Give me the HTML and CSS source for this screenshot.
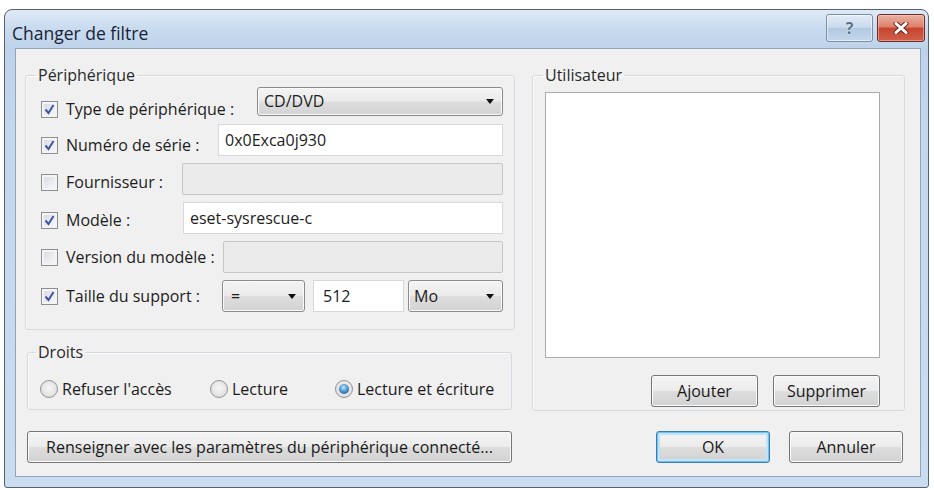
FILE: index.html
```html
<!DOCTYPE html>
<html lang="fr">
<head>
<meta charset="utf-8">
<title>Changer de filtre</title>
<link rel="stylesheet" href="styles.css">
</head>
<body>
<div class="window">
  <div class="titlebar">
    <div class="title">Changer de filtre</div>
    <div class="caption-btns">
      <div class="cap help">?</div>
      <div class="cap close">
        <svg width="16" height="12" viewBox="0 0 16 12"><path d="M3 1.5 L13 10.5 M13 1.5 L3 10.5" stroke="#6b2a22" stroke-width="5" stroke-linecap="round" fill="none"/><path d="M3 1.5 L13 10.5 M13 1.5 L3 10.5" stroke="#ffffff" stroke-width="3" stroke-linecap="round" fill="none"/></svg>
      </div>
    </div>
  </div>
  <div class="client">
    <div class="main">
      <div class="col-left">
        <fieldset class="group periph">
          <legend>Périphérique</legend>
          <div class="row first">
            <div class="chk w-type dy8"><span class="cb"><svg width="15" height="15" viewBox="0 0 15 15"><path d="M3.5 7.5 L6.5 11 L11.5 3" stroke="#3f57a6" stroke-width="2" fill="none"/></svg></span><span>Type de périphérique :</span></div>
            <div class="combo short"><span>CD/DVD</span><span class="arrow"></span></div>
          </div>
          <div class="row">
            <div class="chk w-num dy5"><span class="cb"><svg width="15" height="15" viewBox="0 0 15 15"><path d="M3.5 7.5 L6.5 11 L11.5 3" stroke="#3f57a6" stroke-width="2" fill="none"/></svg></span><span>Numéro de série :</span></div>
            <div class="field">0x0Exca0j930</div>
          </div>
          <div class="row">
            <div class="chk w-four dy3"><span class="cb"></span><span>Fournisseur :</span></div>
            <div class="field disabled"></div>
          </div>
          <div class="row">
            <div class="chk w-mod dy2"><span class="cb"><svg width="15" height="15" viewBox="0 0 15 15"><path d="M3.5 7.5 L6.5 11 L11.5 3" stroke="#3f57a6" stroke-width="2" fill="none"/></svg></span><span>Modèle :</span></div>
            <div class="field">eset-sysrescue-c</div>
          </div>
          <div class="row">
            <div class="chk w-ver"><span class="cb"></span><span>Version du modèle :</span></div>
            <div class="field disabled"></div>
          </div>
          <div class="row">
            <div class="chk w-taille"><span class="cb"><svg width="15" height="15" viewBox="0 0 15 15"><path d="M3.5 7.5 L6.5 11 L11.5 3" stroke="#3f57a6" stroke-width="2" fill="none"/></svg></span><span>Taille du support :</span></div>
            <div class="combo op"><span>=</span><span class="arrow"></span></div>
            <div class="field size">512</div>
            <div class="combo unit"><span>Mo</span><span class="arrow"></span></div>
          </div>
        </fieldset>
        <fieldset class="group droits">
          <legend>Droits</legend>
          <div class="radios">
            <div class="radio r1"><span class="rb"></span><span>Refuser l'accès</span></div>
            <div class="radio r2"><span class="rb"></span><span>Lecture</span></div>
            <div class="radio"><span class="rb"><span class="dot"></span></span><span>Lecture et écriture</span></div>
          </div>
        </fieldset>
      </div>
      <div class="col-right">
        <fieldset class="group user">
          <legend>Utilisateur</legend>
          <div class="listbox"></div>
          <div class="btnrow">
            <div class="btn small">Ajouter</div>
            <div class="btn small">Supprimer</div>
          </div>
        </fieldset>
      </div>
    </div>
    <div class="footer">
      <div class="btn wide">Renseigner avec les paramètres du périphérique connecté...</div>
      <div class="dlg-btns">
        <div class="btn dlg default">OK</div>
        <div class="btn dlg">Annuler</div>
      </div>
    </div>
  </div>
</div>
</body>
</html>
```
FILE: styles.css
```css
* { box-sizing: border-box; }
html, body { margin: 0; padding: 0; background: #ffffff; }
body {
  font-family: "Open Sans", "Noto Sans", "DejaVu Sans", sans-serif;
  font-size: 16px;
  color: #1c1c1c;
}

.window {
  margin: 9px 0 0 4px;
  width: 925px;
  height: 479px;
  border: 1px solid #56626f;
  border-radius: 8px 8px 3px 3px;
  background: linear-gradient(180deg, #dfeaf6 0px, #c9dbef 18px, #bed3ea 38px, #c3d7ed 120px, #cadcf0 100%);
  padding: 0 7px 10px 10px;
  display: flex;
  flex-direction: column;
}

.titlebar {
  height: 38px;
  display: flex;
  align-items: flex-start;
}
.title {
  flex: 1;
  margin: 13px 0 0 -3px;
  line-height: 20px;
  font-size: 17.5px;
  color: #172236;
}
.caption-btns {
  display: flex;
  gap: 4px;
  margin: 4px -4px 0 0;
}
.cap {
  height: 28px;
  border-radius: 3px;
  display: flex;
  align-items: center;
  justify-content: center;
}
.help {
  width: 47px;
  border: 1px solid #7a8ea8;
  background: linear-gradient(180deg, #e3ecf6 0%, #c9d9ec 48%, #b3c9e2 52%, #c4d7ec 100%);
  box-shadow: inset 0 0 0 1px rgba(255,255,255,0.55);
  color: #56708f;
  font-weight: bold;
  font-size: 16px;
  text-shadow: 0 0 2px #ffffff;
}
.close {
  width: 48px;
  border: 1px solid #6e2c24;
  background: linear-gradient(180deg, #eab2a4 0%, #dc8069 45%, #c8452f 52%, #d0604a 100%);
  box-shadow: inset 0 0 0 1px rgba(255,220,210,0.45);
}

.client {
  flex: 1;
  background: #f0f0f0;
  border: 1px solid #91a4bb;
  padding: 16px 15px 11px 9px;
  display: flex;
  flex-direction: column;
}

.main {
  display: flex;
  gap: 17px;
}
.col-left { width: 490px; display: flex; flex-direction: column; }
.col-right { width: 373px; }

.group {
  margin: 0;
  border: 1px solid #d6dadf;
  border-radius: 3px;
  box-shadow: inset 1px 1px 0 #fbfbfb;
  min-width: 0;
}
.group legend {
  padding: 0 2px;
  line-height: 20px;
  color: #2a2a2a;
}

.periph { padding: 0 11px 17px 15px; }
.periph legend { margin-left: -5px; }

.row {
  display: flex;
  align-items: center;
  height: 32px;
  margin-top: 7px;
}
.row.first { margin-top: 0; margin-bottom: 3px; }

.chk {
  display: flex;
  align-items: center;
  gap: 8px;
  flex: none;
  white-space: nowrap;
}
.dy8 { margin-top: 16px; }
.dy5 { margin-top: 10px; }
.dy3 { margin-top: 6px; }
.dy2 { margin-top: 4px; }
.w-type { width: 216px; }
.w-num { width: 177px; }
.w-four { width: 141px; }
.w-mod { width: 142px; }
.w-ver { width: 182px; }
.w-taille { width: 181px; }

.cb {
  width: 17px;
  height: 17px;
  flex: none;
  border: 1px solid #8e8f90;
  background: linear-gradient(135deg, #d4d6dc 0%, #eceef3 60%, #f8f8fa 100%);
  box-shadow: inset 0 0 0 2px #f4f4f4;
  display: flex;
  align-items: center;
  justify-content: center;
}
.cb svg { display: block; }

.combo {
  display: flex;
  align-items: center;
  height: 32px;
  border: 1px solid #8b8b8b;
  border-radius: 3px;
  background: linear-gradient(180deg, #f4f4f4 0%, #ebebeb 48%, #dddddd 52%, #d3d3d3 100%);
  box-shadow: inset 0 0 0 1px #fafafa;
  padding-left: 6px;
}
.combo.short { flex: 1; height: 29px; }
.combo.op { width: 83px; padding-left: 8px; }
.combo.unit { width: 95px; margin-left: 4px; padding-left: 5px; }
.arrow {
  margin-left: auto;
  margin-right: 8px;
  width: 0;
  height: 0;
  border-left: 4px solid transparent;
  border-right: 4px solid transparent;
  border-top: 5px solid #111111;
}

.field {
  flex: 1;
  height: 32px;
  background: #ffffff;
  border: 1px solid #d6d8db;
  display: flex;
  align-items: center;
  padding-left: 6px;
}
.field.disabled {
  background: #ebebeb;
  border-color: #c6c6c6;
  border-radius: 2px;
}
.field.size { flex: none; width: 91px; margin-left: 8px; padding-left: 9px; }

.droits {
  margin: 12px 3px 0 2px;
  padding: 17px 10px 10px 12px;
}
.droits legend { margin-left: -4px; }
.radios { display: flex; align-items: center; height: 20px; }
.radio { display: flex; align-items: center; gap: 4px; white-space: nowrap; }
.r1 { width: 170px; }
.r2 { width: 125px; }
.rb {
  width: 18px;
  height: 18px;
  flex: none;
  border-radius: 50%;
  border: 1px solid #939495;
  background: radial-gradient(circle at 50% 45%, #f6f6f6 0%, #e6e6e6 55%, #cfcfcf 100%);
  display: flex;
  align-items: center;
  justify-content: center;
}
.dot {
  width: 10px;
  height: 10px;
  border-radius: 50%;
  background: radial-gradient(circle at 45% 35%, #c8e8fb 0%, #5aa2da 40%, #1f5f9e 80%, #173f6a 100%);
}

.user { padding: 7px 24px 3px 12px; height: 346px; }
.user legend { margin-left: -2px; }
.listbox {
  height: 266px;
  background: #ffffff;
  border: 1px solid #a9abae;
}
.btnrow {
  display: flex;
  justify-content: flex-end;
  gap: 15px;
  margin-top: 17px;
}

.btn {
  height: 32px;
  border: 1px solid #747474;
  border-radius: 3px;
  background: linear-gradient(180deg, #f4f4f4 0%, #ececec 48%, #dddddd 52%, #d2d2d2 100%);
  box-shadow: inset 0 0 0 1px #fbfbfb;
  display: flex;
  align-items: center;
  justify-content: center;
  white-space: nowrap;
  color: #1a1a1a;
}
.btn.small { width: 107px; }
.btn.wide { width: 485px; }
.btn.dlg { width: 114px; }
.btn.default {
  border-color: #3b7db3;
  box-shadow: inset 0 0 0 1px #6fc3ef, inset 0 0 0 3px #bfe4f8;
}

.footer {
  margin-top: 20px;
  display: flex;
  justify-content: space-between;
  padding: 0 2px 0 2px;
}
.dlg-btns { display: flex; gap: 19px; }
```
